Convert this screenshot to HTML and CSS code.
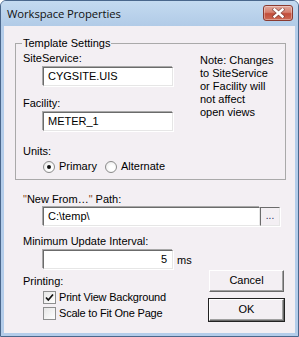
FILE: index.html
```html
<!DOCTYPE html>
<html>
<head>
<meta charset="utf-8">
<link rel="stylesheet" href="styles.css">
</head>
<body>
<div class="window">
  <div class="titlebar">
    <span class="title">Workspace Properties</span>
    <div class="close">
      <svg width="13" height="10" viewBox="0 0 13 10">
        <path d="M2.5 1.5 L10.5 8.5 M10.5 1.5 L2.5 8.5" stroke="#5a3030" stroke-width="4" stroke-linecap="square" fill="none" opacity="0.55"/>
        <path d="M2.5 1.5 L10.5 8.5 M10.5 1.5 L2.5 8.5" stroke="#ffffff" stroke-width="2.4" stroke-linecap="square" fill="none"/>
      </svg>
    </div>
  </div>
  <div class="client">
    <div class="group">
      <span class="legend">Template Settings</span>
      <div class="group-left">
        <div class="label">SiteService:</div>
        <div class="field">CYGSITE.UIS</div>
        <div class="label label-gap">Facility:</div>
        <div class="field">METER_1</div>
        <div class="label label-units">Units:</div>
        <div class="radios">
          <div class="opt opt-first"><span class="radio on"></span><span>Primary</span></div>
          <div class="opt"><span class="radio"></span><span>Alternate</span></div>
        </div>
      </div>
      <div class="note">Note: Changes<br>to SiteService<br>or Facility will<br>not affect<br>open views</div>
    </div>

    <div class="lower">
      <div class="label label-path"><span class="q">"</span>New From…<span class="q">"</span> Path:</div>
      <div class="path-row">
        <div class="field field-path">C:\temp\</div>
        <div class="browse">...</div>
      </div>
      <div class="label label-min">Minimum Update Interval:</div>
      <div class="min-row">
        <div class="field field-num">5</div>
        <span class="unit">ms</span>
      </div>
      <div class="bottom">
        <div class="printing">
          <div class="label label-print">Printing:</div>
          <div class="check-row check-first"><span class="check on"><svg width="11" height="11" viewBox="0 0 11 11"><path d="M2 5.5 L4.3 8 L9 2.5" stroke="#111" stroke-width="1.7" fill="none"/></svg></span><span class="tight">Print View Background</span></div>
          <div class="check-row"><span class="check"></span><span class="tight">Scale to Fit One Page</span></div>
        </div>
        <div class="buttons">
          <div class="btn">Cancel</div>
          <div class="btn btn-default">OK</div>
        </div>
      </div>
    </div>
  </div>
</div>
</body>
</html>
```
FILE: styles.css
```css
html, body {
  margin: 0;
  padding: 0;
  background: #ffffff;
}

.window {
  width: 299px;
  height: 337px;
  box-sizing: border-box;
  border: 1px solid #4a678c;
  border-radius: 6px 6px 0 0;
  background: #b4cdea;
  display: flex;
  flex-direction: column;
  font-family: "Liberation Sans", Arial, sans-serif;
  font-size: 11px;
  color: #000;
}

.titlebar {
  height: 25px;
  flex: none;
  display: flex;
  align-items: center;
  justify-content: space-between;
  padding: 0 5px 0 6px;
  border-radius: 5px 5px 0 0;
  background: linear-gradient(#c4daf0, #b1cbe7);
}

.title {
  font-family: "Open Sans", "Noto Sans", sans-serif;
  font-size: 11.3px;
  color: #111;
  letter-spacing: -0.1px;
  margin-top: -1px;
}

.close {
  width: 30px;
  height: 16px;
  box-sizing: border-box;
  margin-top: -1px;
  border: 1px solid #8a3a30;
  border-radius: 3px;
  background: linear-gradient(#e2a89c 0%, #d6806f 45%, #c24d3a 55%, #cd6a55 100%);
  display: flex;
  align-items: center;
  justify-content: center;
  box-shadow: inset 0 0 0 1px rgba(255, 255, 255, 0.35);
}

.close svg {
  display: block;
}

.client {
  flex: 1;
  margin: 0 3px 3px 3px;
  background: #f3eff3;
  padding: 17px 9px 0 11px;
}

.group {
  position: relative;
  height: 137px;
  box-sizing: border-box;
  border: 1px solid #a9a9a9;
  display: flex;
  padding: 8px 0 0 7px;
}

.legend {
  position: absolute;
  left: 6px;
  top: -7px;
  padding: 0 1px;
  background: #f3eff3;
  line-height: 13px;
}

.group-left {
  width: 177px;
  flex: none;
}

.label {
  line-height: 13px;
  white-space: nowrap;
}

.label-gap {
  margin-top: 11px;
}

.label-units {
  margin-top: 14px;
}

.field {
  width: 130px;
  height: 19px;
  box-sizing: border-box;
  margin: 2px 0 0 20px;
  padding: 0 4px;
  line-height: 17px;
  background: #ffffff;
  border-top: 1px solid #6b6b6b;
  border-left: 1px solid #6b6b6b;
  border-right: 1px solid #e6e6e6;
  border-bottom: 1px solid #e6e6e6;
  box-shadow: -1px -1px 0 #a8a8a8, 1px 1px 0 #ffffff;
  white-space: nowrap;
}

.radios {
  display: flex;
  margin: 2px 0 0 20px;
  line-height: 13px;
}

.opt {
  display: flex;
  align-items: center;
}

.opt-first {
  width: 62px;
}

.radio {
  width: 12px;
  height: 12px;
  box-sizing: border-box;
  border-radius: 50%;
  border: 1px solid #8b8b8b;
  background: radial-gradient(circle at 60% 60%, #ffffff 30%, #e3e3e3 100%);
  margin-right: 4px;
  position: relative;
  flex: none;
}

.radio.on::after {
  content: "";
  position: absolute;
  left: 3px;
  top: 3px;
  width: 4px;
  height: 4px;
  border-radius: 50%;
  background: #111;
}

.note {
  padding-top: 2px;
  line-height: 13px;
}

.lower {
  padding: 0 2px 0 8px;
}

.label-path {
  margin-top: 13px;
}

.q {
  color: #8a4a18;
}

.path-row {
  display: flex;
  margin: 1px 0 0 20px;
}

.field-path {
  width: 217px;
  margin: 0;
}

.browse {
  width: 20px;
  height: 19px;
  box-sizing: border-box;
  border-top: 1px solid #6b6b6b;
  border-left: 1px solid #6b6b6b;
  border-right: 1px solid #e6e6e6;
  border-bottom: 1px solid #e6e6e6;
  box-shadow: 1px 1px 0 #ffffff;
  background: #f3eff3;
  text-align: center;
  line-height: 15px;
  font-size: 10px;
  color: #2a2a5a;
}

.label-min {
  margin-top: 9px;
}

.min-row {
  display: flex;
  align-items: center;
  margin: 2px 0 0 20px;
}

.field-num {
  margin: 0;
  text-align: right;
  padding-right: 5px;
}

.unit {
  margin-left: 4px;
}

.bottom {
  display: flex;
  justify-content: space-between;
}

.label-print {
  margin-top: 6px;
}

.check-row {
  display: flex;
  align-items: center;
  height: 16px;
  margin-left: 20px;
}

.check-first {
  margin-top: 1px;
}

.tight {
  letter-spacing: -0.2px;
}

.check {
  width: 13px;
  height: 13px;
  box-sizing: border-box;
  border: 1px solid #8e8f8f;
  background: linear-gradient(135deg, #e6e6e6, #ffffff);
  margin-right: 3px;
  display: flex;
  align-items: center;
  justify-content: center;
  flex: none;
}

.check svg {
  display: block;
}

.buttons {
  display: flex;
  flex-direction: column;
  margin-top: 1px;
}

.btn {
  width: 75px;
  height: 22px;
  box-sizing: border-box;
  border-top: 1px solid #ffffff;
  border-left: 1px solid #ffffff;
  border-right: 1px solid #6a6a6a;
  border-bottom: 1px solid #6a6a6a;
  box-shadow: inset -1px -1px 0 #a0a0a0;
  background: #f3eff3;
  text-align: center;
  line-height: 19px;
}

.btn-default {
  margin-top: 7px;
  outline: 1px solid #222;
}
```
